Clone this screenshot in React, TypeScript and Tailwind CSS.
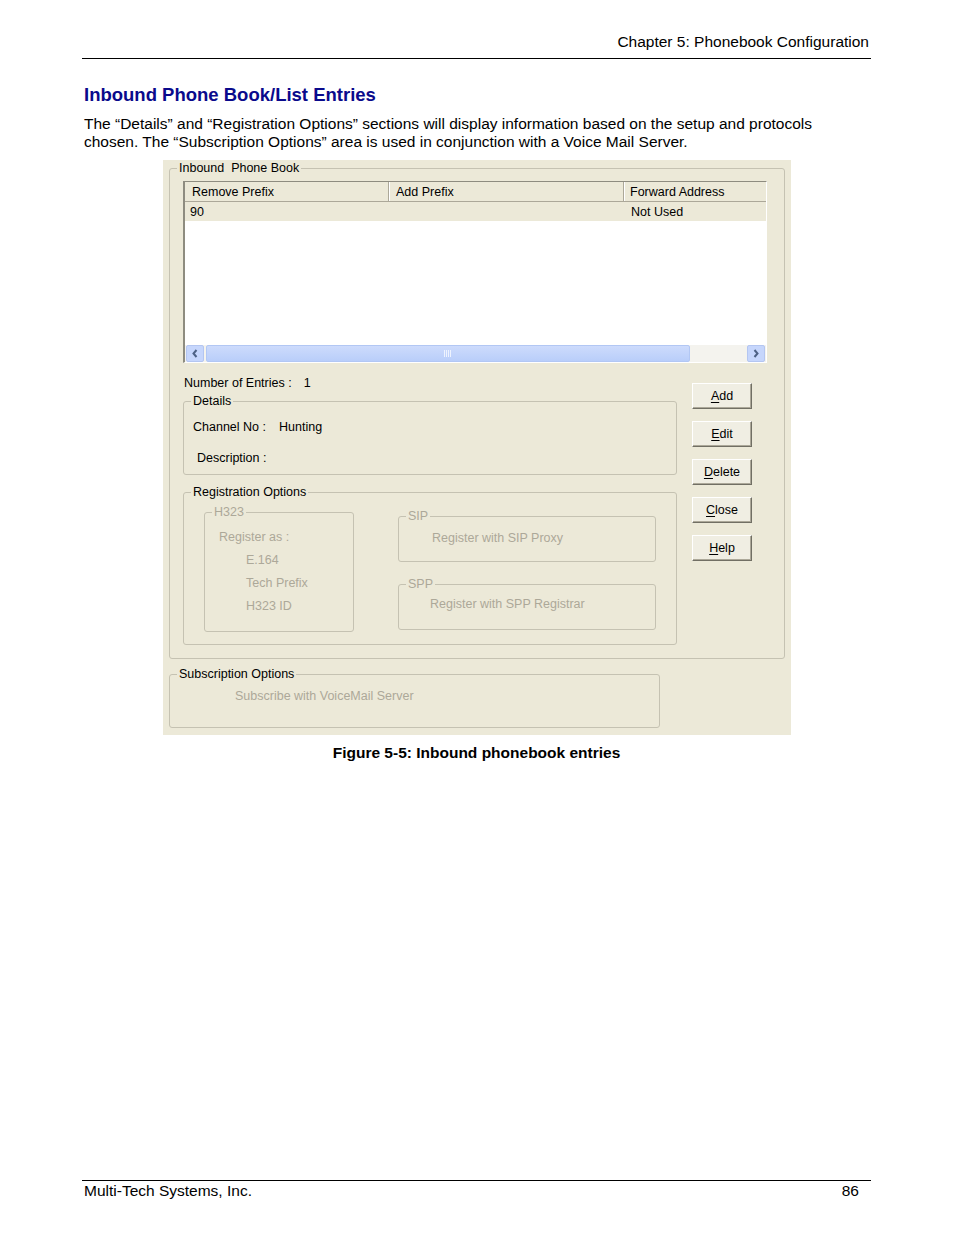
import React from 'react'

type GroupBoxProps = {
  title: string
  disabled?: boolean
  className?: string
  inner?: string
  children?: React.ReactNode
}

// XP style group box; padding lives on the inner div so the legend stays put
const GroupBox: React.FC<GroupBoxProps> = ({ title, disabled = false, className = '', inner = '', children }) => (
  <fieldset className={`border border-[#c5c2b2] rounded-[3px] ${className}`}>
    <legend className={`ml-[7px] px-[2px] leading-[15px] whitespace-pre ${disabled ? 'text-[#aca899]' : 'text-black'}`}>
      {title}
    </legend>
    <div className={inner}>{children}</div>
  </fieldset>
)

const DlgButton: React.FC<{ label: string }> = ({ label }) => (
  <button
    type="button"
    className="h-[26px] w-[60px] bg-[#f0eee3] border border-t-white border-l-white border-r-[#716f64] border-b-[#716f64] shadow-[inset_-1px_-1px_0_#aca899] text-black leading-none"
  >
    <span className="underline underline-offset-2">{label[0]}</span>
    {label.slice(1)}
  </button>
)

const Chevron: React.FC<{ dir: 'left' | 'right' }> = ({ dir }) => (
  <svg width="8" height="9" viewBox="0 0 8 9">
    <polyline
      points={dir === 'left' ? '5.5,1 2.5,4.5 5.5,8' : '2.5,1 5.5,4.5 2.5,8'}
      fill="none"
      stroke="#4d6185"
      strokeWidth="2"
    />
  </svg>
)

const ScrollButton: React.FC<{ dir: 'left' | 'right' }> = ({ dir }) => (
  <div className="w-[18px] h-[17px] rounded-[2px] border border-[#b4c6f1] bg-[#c6d6fc] flex items-center justify-center">
    <Chevron dir={dir} />
  </div>
)

const ListView = () => (
  <div className="h-[182px] w-[584px] flex flex-col bg-white border-l-2 border-t border-l-[#8e8c80] border-t-[#8e8c80] border-r border-b border-r-white border-b-white">
    {/* header */}
    <div className="h-[20px] flex bg-[#ece9d8] border-b border-[#aca899]">
      <div className="w-[204px] pl-[7px] flex items-center border-r border-[#aca899]">Remove Prefix</div>
      <div className="w-[235px] pl-[7px] flex items-center border-r border-[#aca899] shadow-[inset_1px_0_0_#fff]">Add Prefix</div>
      <div className="flex-1 pl-[6px] flex items-center shadow-[inset_1px_0_0_#fff]">Forward Address</div>
    </div>
    {/* row */}
    <div className="h-[19px] flex items-center bg-[#ece9d8]">
      <div className="w-[204px] pl-[5px]">90</div>
      <div className="w-[235px]" />
      <div className="flex-1 pl-[7px]">Not Used</div>
    </div>
    <div className="flex-1" />
    {/* horizontal scrollbar */}
    <div className="h-[17px] flex bg-[#f4f3ee] px-[1px]">
      <ScrollButton dir="left" />
      <div className="ml-[2px] w-[484px] h-[17px] rounded-[2px] border border-[#b2c7f4] bg-gradient-to-b from-[#cddbfc] to-[#b9cefa] flex items-center justify-center">
        <svg width="8" height="7" viewBox="0 0 8 7">
          <path d="M0.5 0v7M2.5 0v7M4.5 0v7M6.5 0v7" stroke="#eef3fe" strokeWidth="1" />
        </svg>
      </div>
      <div className="flex-1" />
      <ScrollButton dir="right" />
    </div>
  </div>
)

const Dialog = () => (
  <div className="w-[628px] h-[575px] bg-[#ece9d8] pl-[6px] pt-[1px] text-[12.5px] text-black font-['Liberation_Sans',Arial,sans-serif]">
    <GroupBox title="Inbound  Phone Book" className="w-[616px]" inner="pl-[13px] pr-[16px] pt-[5px] pb-[13px]">
      <ListView />
      <div className="flex items-start">
        <div className="w-[494px]">
          <p className="mt-[13px] ml-[1px] leading-[15px]">
            Number of Entries :<span className="ml-[12px]">1</span>
          </p>
          <GroupBox title="Details" className="mt-[3px]" inner="pl-[9px] pt-[11px] pb-[8px]">
            <p className="leading-[15px]">
              <span className="inline-block w-[86px]">Channel No :</span>Hunting
            </p>
            <p className="leading-[15px] mt-[16px] ml-[4px]">Description :</p>
          </GroupBox>
          <GroupBox title="Registration Options" className="mt-[10px]" inner="pl-[20px] pb-[12px] flex items-start">
            <GroupBox title="H323" disabled className="w-[150px] mt-[5px]" inner="pl-[14px] pt-[6px] pb-[13px]">
              <div className="text-[#aca899] leading-[23px]">
                <p>Register as :</p>
                <p className="ml-[27px]">E.164</p>
                <p className="ml-[27px]">Tech Prefix</p>
                <p className="ml-[27px]">H323 ID</p>
              </div>
            </GroupBox>
            <div className="ml-[44px] w-[258px]">
              <GroupBox title="SIP" disabled className="mt-[9px]" inner="pl-[33px] pt-[7px] pb-[15px]">
                <p className="text-[#aca899] leading-[15px]">Register with SIP Proxy</p>
              </GroupBox>
              <GroupBox title="SPP" disabled className="mt-[15px]" inner="pl-[31px] pt-[5px] pb-[17px]">
                <p className="text-[#aca899] leading-[15px]">Register with SPP Registrar</p>
              </GroupBox>
            </div>
          </GroupBox>
        </div>
        <div className="ml-[15px] pt-[20px] flex flex-col gap-[12px]">
          <DlgButton label="Add" />
          <DlgButton label="Edit" />
          <DlgButton label="Delete" />
          <DlgButton label="Close" />
          <DlgButton label="Help" />
        </div>
      </div>
    </GroupBox>
    <GroupBox title="Subscription Options" className="w-[491px] mt-[8px]" inner="pl-[65px] pt-[7px] pb-[23px]">
      <p className="text-[#aca899] leading-[15px]">Subscribe with VoiceMail Server</p>
    </GroupBox>
  </div>
)

export default function App() {
  return (
    <div className="w-[954px] h-[1235px] bg-white text-black flex flex-col font-['Liberation_Sans',Arial,Helvetica,sans-serif] text-[15.5px] leading-[18px]">
      <div className="ml-[82px] w-[789px] flex flex-col flex-1">
        <header className="pt-[33px] pr-[2px] text-right">Chapter 5: Phonebook Configuration</header>
        <div className="mt-[7px] border-t border-black" />

        <h1 className="mt-[25px] pl-[2px] text-[18.5px] leading-[22px] font-bold text-[#0a0a8c]">
          Inbound Phone Book/List Entries
        </h1>
        <p className="mt-[9px] pl-[2px]">
          The “Details” and “Registration Options” sections will display information based on the setup and protocols
          <br />
          chosen. The “Subscription Options” area is used in conjunction with a Voice Mail Server.
        </p>

        <div className="mt-[9px] ml-[81px]">
          <Dialog />
        </div>
        <p className="mt-[9px] text-center font-bold">Figure 5-5: Inbound phonebook entries</p>

        <footer className="mt-auto mb-[35px] border-t border-black pt-[1px] pl-[2px] pr-[12px] flex justify-between">
          <span>Multi-Tech Systems, Inc.</span>
          <span>86</span>
        </footer>
      </div>
    </div>
  )
}
